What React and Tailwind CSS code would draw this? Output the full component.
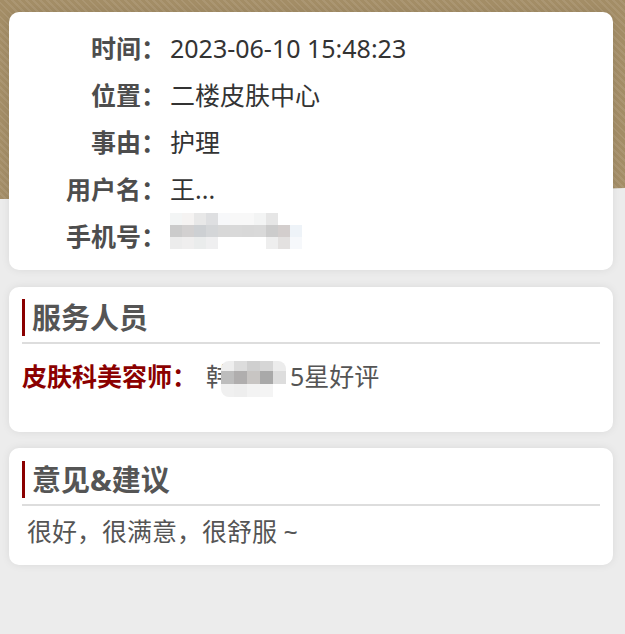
import React from 'react';

const font = { fontFamily: '"Noto Sans", "Noto Sans CJK SC", sans-serif' };

const info = [
  { label: '时间：', value: '2023-06-10 15:48:23' },
  { label: '位置：', value: '二楼皮肤中心' },
  { label: '事由：', value: '护理' },
  { label: '用户名：', value: '王...' },
  { label: '手机号：', value: null },
];

// pixelated mosaic that hides the phone number
const phoneCells = [
  ['#f3f5f5', '#f5f3f2', '#e8e8e8', '#dedfe1', '#f7f8fa', '#f8f8f8', '#f8f8f8', '#f3f4f4', '#e6e6e6', '#ffffff', '#ffffff'],
  ['#cbcbcb', '#d2d0d0', '#cdd0d3', '#d4d6d8', '#d8d8d8', '#d9d9d9', '#d8d8d8', '#d9d9d9', '#cccccc', '#d3cecd', '#eef3f8'],
  ['#ececec', '#efeeee', '#eaecec', '#efeff0', '#ffffff', '#ffffff', '#ffffff', '#ffffff', '#eeeeee', '#e3e1e0', '#f6f8fb'],
];

const nameCells = [
  ['#eeeeee', '#dcdcdc', '#cfcfcf', '#d6d6d6', '#ececec'],
  ['#bdbdbd', '#b0aeae', '#c8c5c3', '#a9a9a9', '#dddddd'],
  ['#f0f0f0', '#eeeeee', '#f3f3f3', '#f4f4f4', '#ffffff'],
];

function Mosaic({ cells, cell, rowH, className }) {
  return (
    <div className={`inline-flex flex-col ${className}`}>
      {cells.map((row, i) => (
        <div key={i} className="flex">
          {row.map((c, j) => (
            <div key={j} style={{ backgroundColor: c, width: cell, height: rowH[i] }} />
          ))}
        </div>
      ))}
    </div>
  );
}

function SectionTitle({ children }) {
  return (
    <>
      <div className="border-l-[3px] border-[#8b0000] pl-[7px] h-[37px] leading-[37px] text-[29px] font-bold text-[#555]">
        {children}
      </div>
      <div className="mt-[6px] border-b-2 border-[#dddddd]" />
    </>
  );
}

export default function App() {
  return (
    <div className="relative min-h-screen bg-[#ececec] overflow-hidden" style={font}>
      {/* gold striped header background */}
      <div className="absolute inset-x-0 top-0 h-[199px] bg-[#a48e68] bg-[repeating-linear-gradient(45deg,#a38d66_0px,#a38d66_3px,#ab9672_3px,#ab9672_5px)] [clip-path:polygon(0_0,100%_0,100%_188px,0_199px)]" />

      <div className="relative px-[9px] pt-3 pb-6 w-[622px]">
        {/* Info card */}
        <div className="bg-white rounded-[10px] shadow-[0_0_8px_rgba(0,0,0,0.08)] pt-[13px] pb-[10px]">
          {info.map((row) => (
            <div key={row.label} className="flex items-center h-[47px]">
              <div className="w-[157px] text-right text-[25px] font-bold text-[#4d4d4d] leading-[47px]">{row.label}</div>
              <div className="ml-[4px] text-[25px] text-[#333] leading-[47px] flex items-center">
                {row.value ?? (
                  <Mosaic cells={phoneCells} cell={12} rowH={[12, 12, 12]} className="mb-[12px]" />
                )}
              </div>
            </div>
          ))}
        </div>

        {/* Staff card */}
        <div className="mt-[17px] bg-white rounded-[10px] shadow-[0_0_8px_rgba(0,0,0,0.08)] px-[13px] pt-[12px] pb-[32px]">
          <SectionTitle>服务人员</SectionTitle>
          <div className="mt-[10px] h-[46px] flex items-center text-[25px]">
            <span className="font-bold text-[#8b0000]">皮肤科美容师：</span>
            <span className="ml-[9px] text-[#555] flex items-center">
              韩
              <Mosaic cells={nameCells} cell={13} rowH={[10, 13, 13]} className="-ml-[10px] mt-[3px] rounded-[8px] overflow-hidden" />
              <span className="ml-[4px]">5星好评</span>
            </span>
          </div>
        </div>

        {/* Feedback card */}
        <div className="mt-4 bg-white rounded-[10px] shadow-[0_0_8px_rgba(0,0,0,0.08)] px-[13px] pt-[13px] pb-[14px]">
          <SectionTitle>意见&amp;建议</SectionTitle>
          <div className="mt-[5px] h-[40px] leading-[40px] pl-[5px] text-[25px] text-[#555]">很好，很满意，很舒服 ~</div>
        </div>
      </div>
    </div>
  );
}
